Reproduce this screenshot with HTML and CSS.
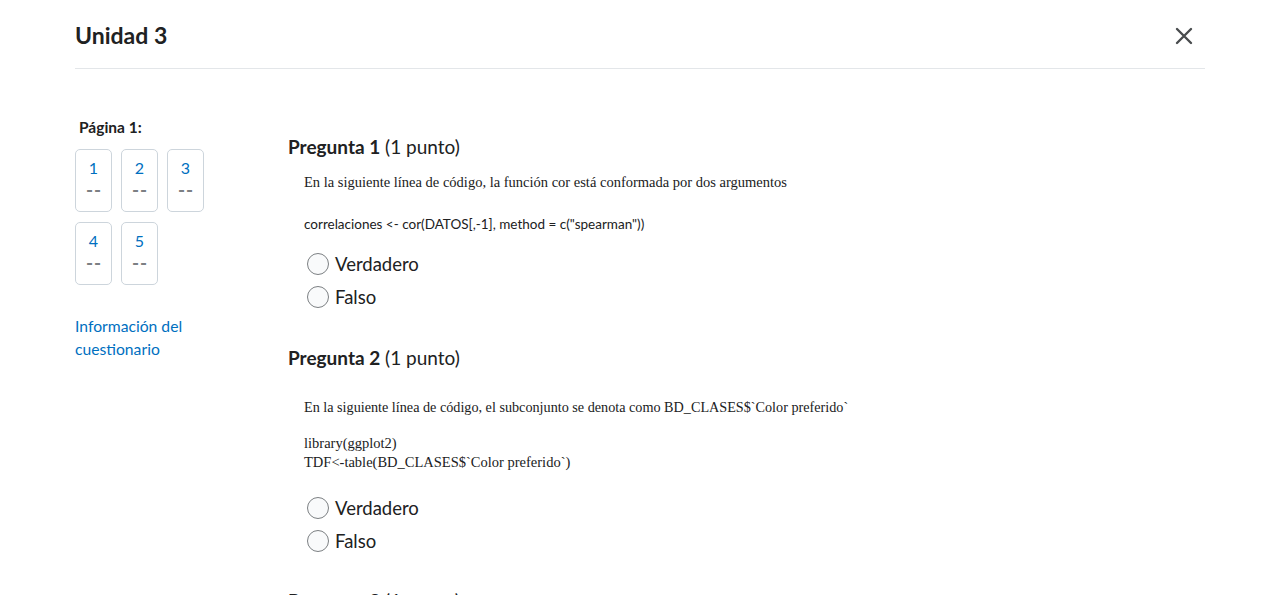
FILE: index.html
```html
<!DOCTYPE html>
<html lang="es">
<head>
<meta charset="utf-8">
<title>Unidad 3</title>
<link rel="stylesheet" href="styles.css">
</head>
<body>
<div class="dialog">
  <header class="head">
    <h1 class="title">Unidad 3</h1>
    <button class="close" aria-label="Cerrar">
      <svg width="18" height="18" viewBox="0 0 18 18"><path d="M2 2L16 16M16 2L2 16" stroke="#494c4e" stroke-width="2.4" stroke-linecap="round"/></svg>
    </button>
  </header>
  <div class="body">
    <aside class="side">
      <div class="page-label">Página 1:</div>
      <div class="tiles">
        <div class="tile"><span class="num">1</span><span class="dash">--</span></div>
        <div class="tile"><span class="num">2</span><span class="dash">--</span></div>
        <div class="tile"><span class="num">3</span><span class="dash">--</span></div>
        <div class="tile"><span class="num">4</span><span class="dash">--</span></div>
        <div class="tile"><span class="num">5</span><span class="dash">--</span></div>
      </div>
      <a class="info" href="#">Información del cuestionario</a>
    </aside>
    <main class="main">
      <section class="q q1">
        <h2 class="qh"><strong>Pregunta 1</strong> (1 punto)</h2>
        <p class="serif">En la siguiente línea de código, la función cor está conformada por dos argumentos</p>
        <p class="code">correlaciones &lt;- cor(DATOS[,-1], method = c("spearman"))</p>
        <ul class="opts">
          <li><span class="radio"></span>Verdadero</li>
          <li><span class="radio"></span>Falso</li>
        </ul>
      </section>
      <section class="q q2">
        <h2 class="qh"><strong>Pregunta 2</strong> (1 punto)</h2>
        <p class="serif">En la siguiente línea de código, el subconjunto se denota como BD_CLASES$`Color preferido`</p>
        <p class="serif code2">library(ggplot2)<br>TDF&lt;-table(BD_CLASES$`Color preferido`)</p>
        <ul class="opts">
          <li><span class="radio"></span>Verdadero</li>
          <li><span class="radio"></span>Falso</li>
        </ul>
      </section>
      <section class="q q3">
        <h2 class="qh"><strong>Pregunta 3</strong> (1 punto)</h2>
      </section>
    </main>
  </div>
</div>
</body>
</html>
```
FILE: styles.css
```css
html, body {
  margin: 0;
  padding: 0;
  background: #fff;
  overflow: hidden;
  height: 595px;
}
body {
  font-family: Lato, "Open Sans", sans-serif;
  color: #202122;
}
.dialog {
  padding: 0 75px;
}
.head {
  display: flex;
  justify-content: space-between;
  align-items: center;
  height: 68px;
  border-bottom: 1px solid #e3e6e9;
}
.title {
  margin: 0;
  font-size: 23px;
  font-weight: 700;
  line-height: 28px;
  padding-top: 1px;
}
.close {
  border: 0;
  background: none;
  padding: 0;
  margin-right: 12px;
  margin-top: 3px;
  width: 18px;
  height: 18px;
  display: flex;
}
.body {
  display: flex;
}
.side {
  width: 213px;
  flex: none;
  padding-top: 49px;
}
.page-label {
  font-size: 15.5px;
  font-weight: 700;
  padding-left: 4px;
  line-height: 18px;
}
.tiles {
  margin-top: 13px;
  display: grid;
  grid-template-columns: repeat(3, 37px);
  gap: 10px 9px;
}
.tile {
  height: 63px;
  border: 1px solid #cdd5dc;
  border-radius: 5px;
  box-sizing: border-box;
  display: flex;
  flex-direction: column;
  align-items: center;
  padding-top: 8px;
}
.num {
  color: #006fbf;
  font-size: 16px;
  line-height: 20px;
}
.dash {
  color: #7c8083;
  font-size: 19px;
  font-weight: 700;
  line-height: 20px;
  margin-top: 2px;
  letter-spacing: 1px;
  padding-left: 1px;
}
.info {
  display: block;
  margin-top: 30px;
  width: 120px;
  color: #006fbf;
  text-decoration: none;
  font-size: 15.7px;
  line-height: 23px;
}
.main {
  flex: 1;
  padding-top: 65px;
}
.qh {
  margin: 0;
  font-size: 19px;
  font-weight: 400;
  line-height: 26px;
}
.qh strong {
  font-weight: 700;
}
.serif {
  font-family: "Liberation Serif", "Times New Roman", serif;
  font-size: 14.5px;
  line-height: 18px;
  margin: 0 0 0 16px;
}
.q1 .serif {
  margin-top: 13px;
}
.code {
  margin: 24px 0 0 16px;
  font-family: Lato, sans-serif;
  font-size: 13.5px;
  line-height: 18px;
}
.q2 {
  margin-top: 32px;
}
.q2 .serif {
  margin-top: 27px;
  font-size: 14.2px;
}
.q2 .code2 {
  margin-top: 18px;
  line-height: 19px;
  font-size: 14.5px;
}
.opts {
  list-style: none;
  margin: 14px 0 0 19px;
  padding: 0;
}
.q2 .opts {
  margin-top: 19px;
}
.opts li {
  display: flex;
  align-items: center;
  font-size: 18.5px;
  height: 33px;
}
.radio {
  width: 22px;
  height: 22px;
  box-sizing: border-box;
  border: 1px solid #7c8083;
  border-radius: 50%;
  margin-right: 6px;
  background: #f9fafb;
}
.q3 {
  margin-top: 31px;
}
```
